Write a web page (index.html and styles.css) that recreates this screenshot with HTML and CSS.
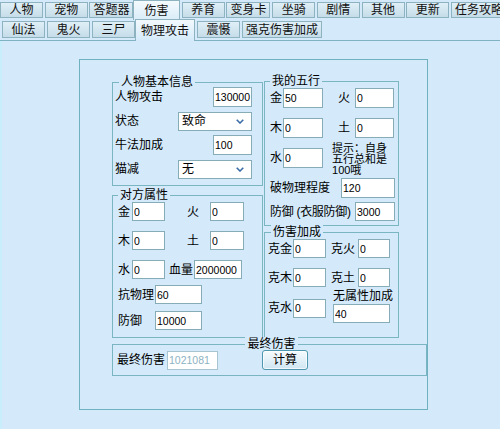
FILE: index.html
```html
<!DOCTYPE html>
<html lang="zh-CN">
<head>
<meta charset="utf-8">
<title>伤害计算</title>
<link rel="stylesheet" href="styles.css">
</head>
<body>
<nav class="tabs tabs-main">
  <span class="tab">人物</span>
  <span class="tab">宠物</span>
  <span class="tab">答题器</span>
  <span class="tab active">伤害</span>
  <span class="tab">养育</span>
  <span class="tab">变身卡</span>
  <span class="tab">坐骑</span>
  <span class="tab">剧情</span>
  <span class="tab">其他</span>
  <span class="tab">更新</span>
  <span class="tab">任务攻略</span>
</nav>
<nav class="tabs tabs-sub">
  <span class="tab">仙法</span>
  <span class="tab">鬼火</span>
  <span class="tab">三尸</span>
  <span class="tab active">物理攻击</span>
  <span class="tab">震慑</span>
  <span class="tab">强克伤害加成</span>
</nav>
<main class="main">
  <div class="panel">
    <div class="columns">
      <div class="col">
        <section class="group g-basic">
          <div class="group-title">人物基本信息</div>
          <div class="row between"><span>人物攻击</span><input class="in w39" value="130000"></div>
          <div class="row between"><span>状态</span><div class="select"><span>致命</span><svg width="8" height="5" viewBox="0 0 8 5"><path d="M0.7 0.7 L4 4 L7.3 0.7" fill="none" stroke="#3c6ea8" stroke-width="1.6"/></svg></div></div>
          <div class="row between"><span>牛法加成</span><input class="in w39" value="100"></div>
          <div class="row between"><span>猫减</span><div class="select"><span>无</span><svg width="8" height="5" viewBox="0 0 8 5"><path d="M0.7 0.7 L4 4 L7.3 0.7" fill="none" stroke="#3c6ea8" stroke-width="1.6"/></svg></div></div>
        </section>
        <section class="group g-enemy fill">
          <div class="group-title">对方属性</div>
          <div class="row r19"><span>金</span><input class="in w33 ml2" value="0"><span class="ml22">火</span><input class="in w34 ml11" value="0"></div>
          <div class="row r19 mt10"><span>木</span><input class="in w33 ml2" value="0"><span class="ml22">土</span><input class="in w34 ml11" value="0"></div>
          <div class="row r19 mt10"><span>水</span><input class="in w33 ml2" value="0"><span class="ml4">血量</span><input class="in w48 ml1" value="2000000"></div>
          <div class="row r19 mt6"><span class="lbl37">抗物理</span><input class="in w47" value="60"></div>
          <div class="row r19 mt7"><span class="lbl37">防御</span><input class="in w47" value="10000"></div>
        </section>
      </div>
      <div class="col">
        <section class="group g-mine">
          <div class="group-title">我的五行</div>
          <div class="row"><span>金</span><input class="in w40 ml1" value="50"><span class="ml15">火</span><input class="in w39 ml5" value="0"></div>
          <div class="row mt10"><span>木</span><input class="in w40 ml1" value="0"><span class="ml15">土</span><input class="in w39 ml5" value="0"></div>
          <div class="row mt10"><span>水</span><input class="in w40 ml1" value="0"><p class="note">提示：自身<br>五行总和是<br>100哦</p></div>
          <div class="row between mt10"><span>破物理程度</span><input class="in w54" value="120"></div>
          <div class="row r19 between mt4"><span class="tight">防御 (衣服防御)</span><input class="in w40" value="3000"></div>
        </section>
        <section class="group g-bonus fill">
          <div class="group-title">伤害加成</div>
          <div class="row r19"><span>克金</span><input class="in w33 ml1" value="0"><span class="ml5">克火</span><input class="in w32 ml3" value="0"></div>
          <div class="row r19 mt10"><span>克木</span><input class="in w33 ml1" value="0"><span class="ml5">克土</span><input class="in w32 ml3" value="0"></div>
          <div class="row-last">
            <div class="pair"><span>克水</span><input class="in w33 ml1" value="0"></div>
            <div class="stack"><span>无属性加成</span><input class="in w57" value="40"></div>
          </div>
        </section>
      </div>
    </div>
    <section class="group g-final">
      <div class="group-title">最终伤害</div>
      <div class="row"><span>最终伤害</span><input class="in w51 ml2" value="1021081" disabled><button class="btn" type="button">计算</button></div>
    </section>
  </div>
</main>
</body>
</html>
```

FILE: styles.css
```css
* { box-sizing: border-box; }
html, body { margin: 0; }
body {
  background: #d4eafa;
  font: 12px/14px "Liberation Sans", "Noto Sans CJK SC", sans-serif;
  color: #000;
  overflow: hidden;
}

/* tabs */
.tabs { display: flex; flex-wrap: nowrap; align-items: flex-start; white-space: nowrap; overflow: hidden; }
.tabs-main { height: 20px; overflow: visible; }
.tabs-sub { height: 21px; padding-left: 2px; border-bottom: 1px solid #7fb3c1; overflow: visible; }
.tab {
  flex: 0 0 auto;
  min-width: 43px;
  padding: 0 3px;
  display: flex;
  align-items: center;
  justify-content: center;
  border: 1px solid #8db3c0;
  background: linear-gradient(#e0eff7, #c5dde9);
  color: #111;
}
.tabs-main .tab { margin-top: 2px; height: 16px; margin-right: 1.7px; }
.tabs-main .tab.active {
  margin-top: 0;
  height: 20px;
  min-width: 47px;
  margin-left: -2px;
  border-bottom: none;
  background: linear-gradient(#f4fafd, #d9ecf8);
}
.tabs-sub .tab { margin-top: 1px; height: 17px; margin-right: 2px; }
.tabs-sub .tab.active {
  margin-top: -1px;
  height: 22px;
  margin-left: -2px;
  padding: 0 5px;
  border-bottom: none;
  background: linear-gradient(#f2f9fd, #d4eafa);
}

/* main area */
.main { border-left: 2px solid #c8eefb; padding: 18px 0 30px; }
.panel {
  margin-left: 77px;
  width: 349px;
  border: 1px solid #6fb1be;
  padding: 22px 0 33px 32px;
}
.columns { display: grid; grid-template-columns: 151px 135px; column-gap: 1px; }
.col { display: flex; flex-direction: column; }

.group { border: 1px solid #79b6c2; display: flex; flex-direction: column; margin: 0; }
.group-title {
  align-self: flex-start;
  margin-top: -8px;
  padding: 0 2px;
  height: 14px;
  line-height: 14px;
  background: #d4eafa;
  white-space: nowrap;
}
.fill { flex: 1; }

.row { display: flex; align-items: center; height: 20px; white-space: nowrap; }
.r19 { height: 19px; }
.between { justify-content: space-between; }

.g-basic { padding: 0 10px 6px 2px; }
.g-basic .group-title { margin-left: 4px; margin-bottom: -2px; }
.g-basic .row + .row { margin-top: 4px; }

.g-enemy { margin-top: 9px; padding: 0 0 7px 5px; }

.g-mine { margin-top: -1px; padding: 0 3px 4px 5px; }

.g-bonus { margin-top: 6px; padding: 0 0 14px 3px; }
.g-bonus .group-title { margin-left: 3px; }

.g-final { margin-top: 6px; padding: 0 0 5px 4px; }
.g-final .group-title { align-self: center; margin-bottom: -1px; }

.note {
  margin: 2px 0 0 9px;
  font-size: 11px;
  line-height: 11px;
  white-space: nowrap;
}
.tight { letter-spacing: -0.3px; }

.row-last { display: flex; align-items: center; margin-top: 2px; }
.pair { display: flex; align-items: center; margin-top: 4px; height: 19px; }
.stack { display: flex; flex-direction: column; align-items: flex-start; margin-left: 7px; }
.stack .in { margin-top: 1px; }

.lbl37 { width: 37px; flex: 0 0 37px; }

/* form controls */
.in {
  height: 20px;
  border: 1px solid #86acb8;
  background: #fff;
  padding: 0 0 0 1px;
  font: 10.5px "Liberation Sans", sans-serif;
  color: #000;
  outline: none;
  flex: 0 0 auto;
}
.r19 .in, .pair .in, .stack .in, .g-final .in { height: 19px; }
.in:disabled { color: #8db3c3; border-color: #a6c5d0; background: #fff; }

.select {
  width: 74px;
  height: 19px;
  display: flex;
  align-items: center;
  justify-content: space-between;
  border: 1px solid #86acb8;
  background: #fff;
  padding: 0 7px 0 3px;
}

.btn {
  margin-left: 44px;
  width: 46px;
  height: 20px;
  padding: 0;
  border: 1px solid #4f97ae;
  border-radius: 3px;
  background: linear-gradient(#f6fbfe, #d0e6f1);
  box-shadow: inset 0 0 0 1px rgba(255,255,255,0.7);
  font: 12px/14px "Liberation Sans", "Noto Sans CJK SC", sans-serif;
  color: #000;
}

/* widths and spacing helpers */
.w32 { width: 32px; } .w33 { width: 33px; } .w34 { width: 34px; }
.w39 { width: 39px; } .w40 { width: 40px; } .w47 { width: 47px; }
.w48 { width: 48px; } .w51 { width: 51px; } .w54 { width: 54px; }
.w57 { width: 57px; }
.ml1 { margin-left: 1px; } .ml2 { margin-left: 2px; } .ml3 { margin-left: 3px; }
.ml4 { margin-left: 4px; } .ml5 { margin-left: 5px; } .ml11 { margin-left: 11px; }
.ml15 { margin-left: 15px; } .ml22 { margin-left: 22px; }
.mt4 { margin-top: 4px; } .mt6 { margin-top: 6px; } .mt7 { margin-top: 7px; }
.mt10 { margin-top: 10px; }
```
